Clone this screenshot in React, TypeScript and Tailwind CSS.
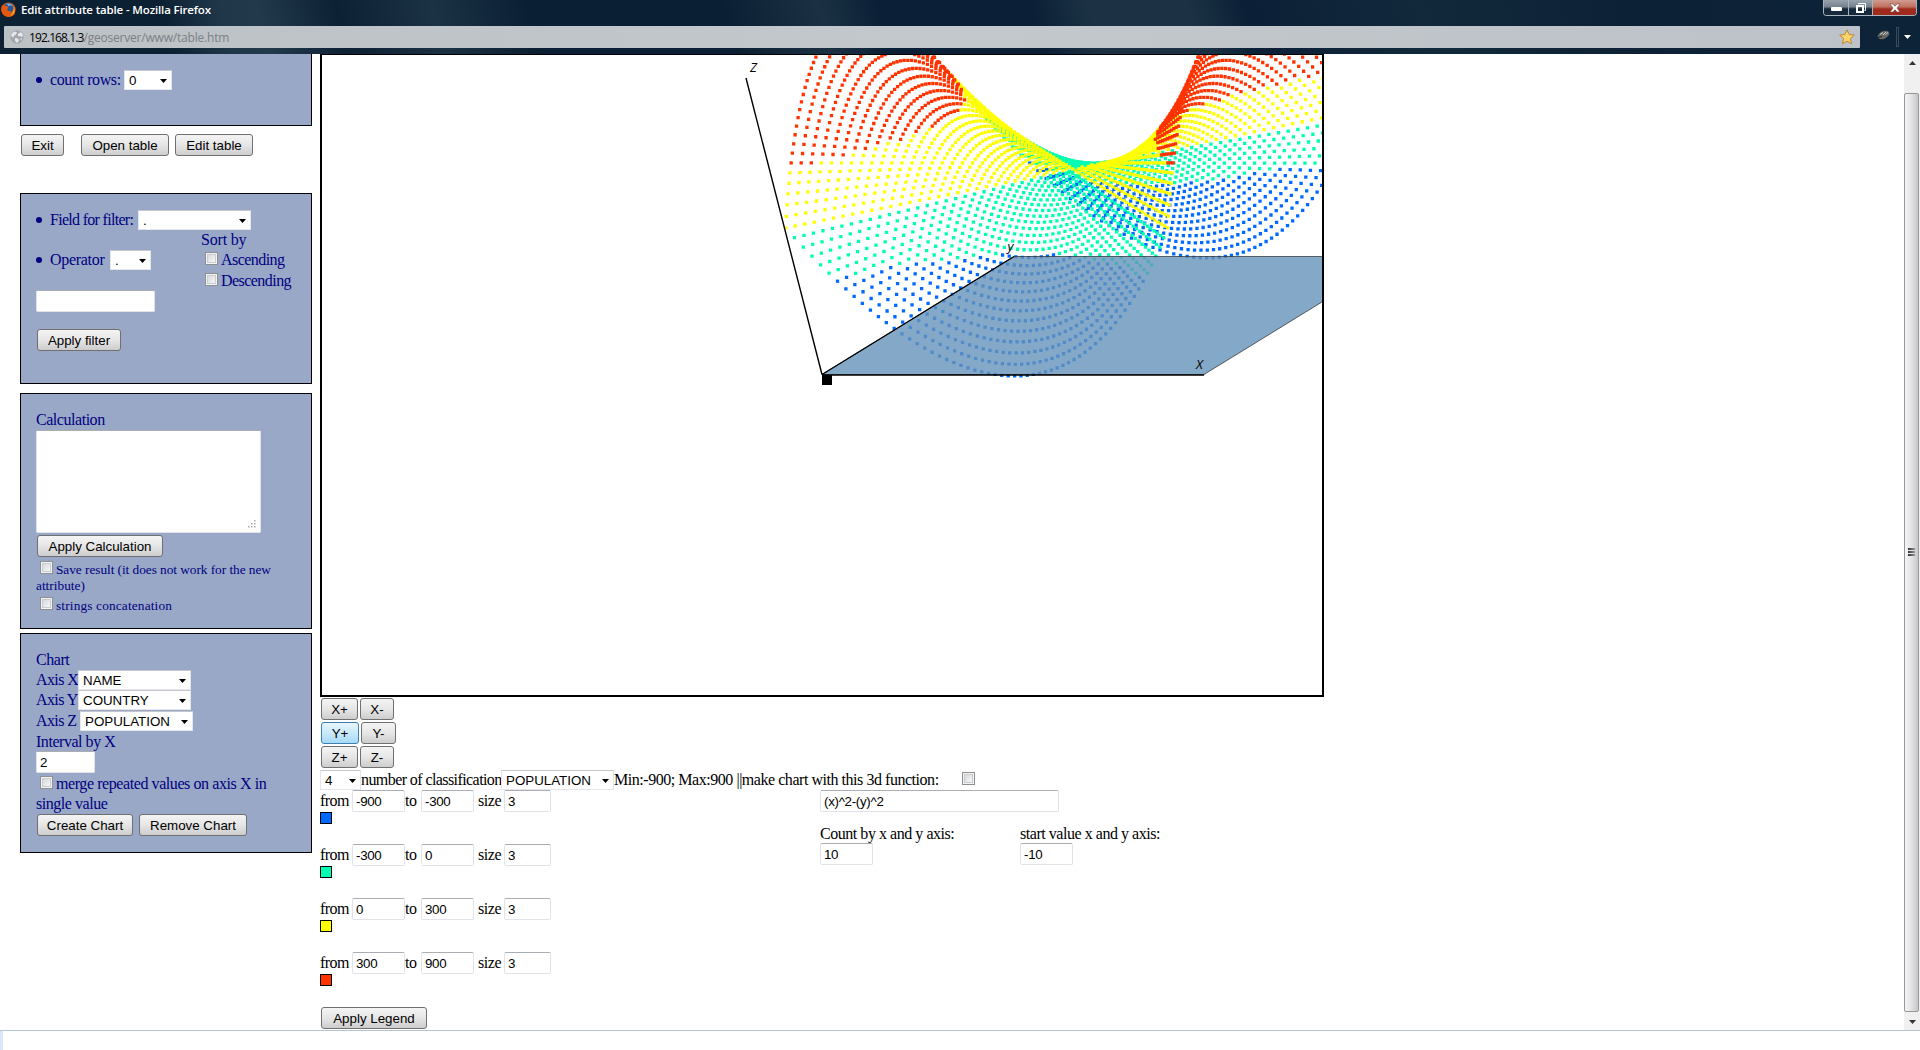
import React from "react";

type BoxProps = { className?: string; children?: React.ReactNode };

const Btn = ({ className = "", active = false, children }: BoxProps & { active?: boolean }) => (
  <button
    className={`flex h-[22px] shrink-0 items-center justify-center whitespace-nowrap rounded-[3px] border pt-px font-['Liberation_Sans',sans-serif] text-[13.33px] leading-none tracking-normal text-black ${
      active
        ? "border-[#3c7fb1] bg-linear-to-b from-[#e8f5fc] via-[#c9e9fb] to-[#a4d9f6]"
        : "border-[#707070] bg-linear-to-b from-[#f4f4f4] from-0% via-[#e6e6e6] via-50% to-[#cdcdcd]"
    } ${className}`}
  >
    {children}
  </button>
);

const Select = ({ className = "", children }: BoxProps) => (
  <div
    className={`flex h-5 shrink-0 items-center justify-between rounded-[1px] border border-[#e3e6ec] border-t-[#c4c6cc] bg-white px-1 pt-px font-['Liberation_Sans',sans-serif] text-[13.33px] leading-none tracking-normal text-black ${className}`}
  >
    <span>{children}</span>
    <svg width="7" height="4" viewBox="0 0 7 4">
      <path d="M0 0H7L3.5 4Z" />
    </svg>
  </div>
);

const Field = ({ className = "", children }: BoxProps) => (
  <div
    className={`flex h-[22px] shrink-0 items-center rounded-[2px] border border-[#e0e3ea] border-t-[#abadb3] bg-white pl-[3px] pt-px font-['Liberation_Sans',sans-serif] text-[13.33px] leading-none tracking-[-0.3px] text-black ${className}`}
  >
    {children}
  </div>
);

const Check = ({ className = "" }: BoxProps) => (
  <span
    className={`flex size-[13px] shrink-0 items-center justify-center border border-[#8e8f8f] bg-[#f4f4f4] ${className}`}
  >
    <span className="size-[9px] border border-[#c8ccd1] bg-linear-to-br from-[#d6d9dd] to-[#f6f6f6]" />
  </span>
);

const Panel = ({ className = "", children }: BoxProps) => (
  <section className={`flex w-[292px] shrink-0 flex-col border border-black bg-[#99a8c7] pl-[15px] ${className}`}>
    {children}
  </section>
);

const Bullet = () => <span className="mr-2 size-[6px] shrink-0 rounded-full bg-[#000080]" />;

const LIMIT = 30;
const colourOf = (z: number) =>
  z < -300 ? "#0069ff" : z < 0 ? "#00ffb3" : z < 300 ? "#ffff00" : "#ff3300";

type Run = { colour: string; d: string };

function surfaceRuns(): Run[] {
  const runs: Run[] = [];
  for (let x = -LIMIT; x <= LIMIT; x++) {
    for (let y = -LIMIT; y <= LIMIT; y++) {
      const z = x * x - y * y;
      const u = (x + LIMIT) / 60;
      const v = (y + LIMIT) / 60;
      const w = (z + 900) / 1800;
      const px = 500 + 382 * u + 192 * v - 76 * w;
      const py = 319.3 - 118 * v - 296 * w;
      if (py < -4 || px > 1001) continue;
      const colour = colourOf(z);
      const dot = `M${px.toFixed(2)} ${py.toFixed(2)}h3.3v3.3h-3.3z`;
      const last = runs[runs.length - 1];
      if (last && last.colour === colour) last.d += dot;
      else runs.push({ colour, d: dot });
    }
  }
  return runs;
}

const RUNS = surfaceRuns();

const Chart = () => (
  <svg width="1000" height="640" viewBox="0 0 1000 640" className="block font-['Open_Sans',sans-serif] tracking-normal">
    {RUNS.map((r, i) => (
      <path key={i} d={r.d} fill={r.colour} />
    ))}
    <path d="M500 319.5L692 201.5H1074L882 319.5Z" fill="#6594ba" fillOpacity="0.8" stroke="#333" strokeOpacity="0.75" />
    <path d="M424 23L500 319.5M500 320H882M500 319.5L692 201.5" fill="none" stroke="#000" strokeWidth="1.4" />
    <rect x="500" y="320" width="10" height="10" />
    <g fontSize="13" fontStyle="italic">
      <text x="428" y="17">Z</text>
      <text x="685.500" y="196">y</text>
      <text x="874" y="314">X</text>
    </g>
  </svg>
);

const FirefoxIcon = () => (
  <svg width="15" height="15" viewBox="0 0 16 16">
    <circle cx="8" cy="8" r="7.6" fill="#e2590f" />
    <circle cx="8.2" cy="6.4" r="5" fill="#245a9c" />
    <path d="M6 1.8c3-.8 5.500.2 6.500 2.700-2-1.200-3.500-.8-4.500 0z" fill="#66b5e6" />
    <path d="M1 4C2 3 3 3.500 4 4.500c2-.5 3 .2 4 1.500L6.500 7.500c0 2 2 3 4.500 2-1 2.500-4 3.500-6 2C7 15 13 14 14 9V5c2 4 1.500 8-2 10-5 2.500-11-.5-11.600-6C.2 7 .4 5.500 1 4z" fill="#e8590c" />
    <path d="M13.500 4.500c2 4 .5 9-3.500 10.100 3-2.500 4-5.500 3.500-10.100z" fill="#ffce3a" />
  </svg>
);

const Globe = () => (
  <svg width="14" height="14" viewBox="0 0 14 14">
    <circle cx="7" cy="7" r="6.700" fill="#a3a7ab" />
    <path d="M2 3l3-1.500 2 1-1 2-2 1-.5 2L1 6zM8 4l3-2 2 3-1 2-2-1-2 .5zM5 8l3 .5 1 2-2 2.500-2-2zM10 9l2-1-.5 2.500z" fill="#e6e8ea" />
  </svg>
);

const Titlebar = () => (
  <header className="flex h-[54px] shrink-0 flex-col bg-[linear-gradient(75deg,#0d2134_0%,#0c2033_9%,#20374a_12%,#22394b_14%,#0d2135_18%,#1b3144_23%,#0a1f33_28%,#0a1f33_38%,#1b3143_43%,#0b2036_46%,#0b2036_54%,#1c3244_57%,#1c3244_62%,#0b2036_65%,#12283b_74%,#0c2135_85%,#0d2337_100%)] font-['Open_Sans',sans-serif]">
    <div className="flex h-[26px] items-start pl-px">
      <span className="mt-[2px]">
        <FirefoxIcon />
      </span>
      <span className="ml-[5px] mt-px whitespace-nowrap text-[11.500px] font-semibold leading-[18px] tracking-[-0.15px] text-white">
        Edit attribute table - Mozilla Firefox
      </span>
      <div className="ml-auto mr-[3px] flex h-4 w-[94px] overflow-hidden rounded-b-[4px] border border-t-0 border-[#aab4bd]">
        <span className="flex w-[25px] items-center justify-center border-r border-[#aab4bd] bg-linear-to-b from-[#97a2ad] from-0% via-[#76828e] via-45% to-[#16283b] to-60%">
          <span className="mt-[3px] h-1 w-[11px] rounded-[1px] bg-white" />
        </span>
        <span className="flex w-6 items-center justify-center border-r border-[#aab4bd] bg-linear-to-b from-[#97a2ad] from-0% via-[#76828e] via-45% to-[#16283b] to-60%">
          <svg width="12" height="12" viewBox="0 0 12 12" fill="none" stroke="#fff">
            <path d="M3.500 2.500v-1h7v7h-1" />
            <path d="M2 4h6v6H2z" strokeWidth="2" />
          </svg>
        </span>
        <span className="flex flex-1 items-center justify-center bg-linear-to-b from-[#cf9c90] from-0% via-[#c0705f] via-45% to-[#a02a1b] to-60%">
          <svg width="12" height="10" viewBox="0 0 12 10">
            <path d="M1 1h3l2 2.300L8 1h3L8 5l3 4H8L6 6.700 4 9H1l3-4z" fill="#fff" stroke="#5a3434" strokeWidth=".5" />
          </svg>
        </span>
      </div>
    </div>
    <div className="flex h-[22px] items-center">
      <div className="ml-1 flex h-[22px] w-[1856px] items-center rounded-[1px] bg-linear-to-r from-[#bcc1c6] via-[#c3c8cc] to-[#bcc2c8] pl-[6px] pr-[5px]">
        <Globe />
        <span className="ml-[5px] whitespace-nowrap pt-[2px] text-[12px] leading-none tracking-[-0.2px] text-[#7b8085]">
          <span className="tracking-[-0.9px] text-black">192.168.1.3</span>/geoserver/www/table.htm
        </span>
        <svg className="ml-auto" width="16" height="16" viewBox="0 0 16 16">
          <path d="M8 .8l2.200 4.700 5.100.6-3.800 3.500 1 5.200L8 12.300l-4.500 2.500 1-5.200L.7 6.100l5.100-.6z" fill="#fcd364" stroke="#b9873c" />
        </svg>
      </div>
      <svg className="mb-1 ml-4" width="15" height="12" viewBox="0 0 15 12">
        <ellipse cx="7.500" cy="6" rx="6.300" ry="3.700" transform="rotate(-24 7.500 6)" fill="#666" />
        <path d="M4 5.500l3-2M7 6l3-3M9.500 5.500l2.500-2" stroke="#ccc" />
        <path d="M2 8.500l4-1" stroke="#222" />
      </svg>
      <span className="ml-[5px] h-5 w-[3px] border border-[#3a4a59]" />
      <svg className="ml-[5px]" width="7" height="4" viewBox="0 0 7 4">
        <path d="M0 0H7L3.500 4Z" fill="#fff" />
      </svg>
    </div>
  </header>
);

const Grip = () => <i className="h-[2px] w-[7px] bg-linear-to-r from-[#333] to-[#999]" />;

const Scrollbar = () => (
  <div className="flex h-[976px] w-4 shrink-0 flex-col items-center bg-[#f0f0f0]">
    <svg className="mt-[7px]" width="7" height="4" viewBox="0 0 7 4">
      <path d="M0 4H7L3.500 0Z" fill="#333" />
    </svg>
    <div className="mr-px mt-7 flex h-[919px] w-[15px] flex-col items-center justify-center gap-px rounded-[2px] border border-[#979797] bg-linear-to-r from-[#f5f5f5] via-[#e3e3e6] via-50% to-[#c6c6ca] pb-px pr-px">
      <Grip />
      <Grip />
      <Grip />
    </div>
    <svg className="mt-2" width="7" height="4" viewBox="0 0 7 4">
      <path d="M0 0H7L3.500 4Z" fill="#333" />
    </svg>
  </div>
);

const Sidebar = () => (
  <aside className="ml-5 flex w-[292px] shrink-0 flex-col text-[#000080]">
    <Panel className="h-[72px] border-t-0 pt-4">
      <div className="flex h-5 items-center">
        <Bullet />
        <span className="w-[74px] tracking-[-0.4px]">count rows:</span>
        <Select className="w-12">0</Select>
      </div>
    </Panel>
    <div className="mt-2 flex pl-px">
      <Btn className="w-[43px]">Exit</Btn>
      <Btn className="ml-[17px] w-[88px]">Open table</Btn>
      <Btn className="ml-[6px] w-[78px]">Edit table</Btn>
    </div>

    <Panel className="mt-[37px] h-[191px] pt-4">
      <div className="flex h-5 items-center">
        <Bullet />
        <span className="w-[88px] tracking-[-0.7px]">Field for filter:</span>
        <Select className="w-[113px]">.</Select>
      </div>
      <div className="flex">
        <div className="w-[165px]">
          <div className="mt-5 flex h-5 items-center">
            <Bullet />
            <span className="w-[60px] tracking-[-0.3px]">Operator</span>
            <Select className="w-[41px]">.</Select>
          </div>
          <Field className="mt-5 w-[119px]" />
        </div>
        <div className="flex flex-col">
          <div className="flex h-5 items-center tracking-[-0.2px]">Sort by</div>
          <div className="flex h-5 items-center pl-1">
            <Check className="mb-[3px] mr-[3px]" />
            <span className="tracking-[-0.55px]">Ascending</span>
          </div>
          <div className="flex h-[22px] items-center pl-1">
            <Check className="mb-[3px] mr-[3px]" />
            <span className="tracking-[-0.55px]">Descending</span>
          </div>
        </div>
      </div>
      <Btn className="ml-px mt-[17px] w-[84px]">Apply filter</Btn>
    </Panel>

    <Panel className="mt-[9px] h-[236px] pt-4">
      <div className="flex h-5 items-center">Calculation</div>
      <div className="flex h-[103px] w-[225px] items-end justify-end rounded-[2px] border border-[#e0e3ea] border-t-[#abadb3] bg-white p-1">
        <svg width="8" height="8" viewBox="0 0 8 8" fill="#aaa">
          <path d="M6 0h1.500v1.500H6zM3 3h1.500v1.500H3zM6 3h1.500v1.500H6zM0 6h1.500v1.500H0zM3 6h1.500v1.500H3zM6 6h1.500v1.500H6z" />
        </svg>
      </div>
      <Btn className="ml-px mt-[2px] w-[126px]">Apply Calculation</Btn>
      <div className="mt-[3px] flex h-5 items-center whitespace-nowrap pl-1 text-[13.33px] tracking-[-0.05px]">
        <Check className="mb-[5px] mr-[3px]" />
        Save result (it does not work for the new
      </div>
      <div className="flex h-3 items-center text-[13.33px] tracking-normal">attribute)</div>
      <div className="mt-1 flex h-5 items-center pl-1 text-[13.33px] tracking-[0.15px]">
        <Check className="mb-[5px] mr-[3px]" />
        strings concatenation
      </div>
    </Panel>

    <Panel className="mt-1 h-[220px] pt-4">
      <div className="flex h-5 items-center">Chart</div>
      <div className="flex h-5 items-center whitespace-nowrap">
        <span className="w-[42px] tracking-[-0.6px]">Axis X</span>
        <Select className="w-[113px]">NAME</Select>
      </div>
      <div className="flex h-5 items-center whitespace-nowrap">
        <span className="w-[42px] tracking-[-0.6px]">Axis Y</span>
        <Select className="w-[113px]">COUNTRY</Select>
      </div>
      <div className="flex h-[22px] items-center whitespace-nowrap">
        <span className="w-[44px] tracking-[-0.6px]">Axis Z</span>
        <Select className="w-[113px]">POPULATION</Select>
      </div>
      <div className="flex h-[19px] items-center">Interval by X</div>
      <Field className="w-[59px]">2</Field>
      <div className="flex h-[22px] items-center whitespace-nowrap pl-1">
        <Check className="mb-[3px] mr-[3px]" />
        <span className="tracking-[-0.42px]">merge repeated values on axis X in</span>
      </div>
      <div className="flex h-[18px] items-center">single value</div>
      <div className="mt-px flex pl-px">
        <Btn className="w-24">Create Chart</Btn>
        <Btn className="ml-[6px] w-[108px]">Remove Chart</Btn>
      </div>
    </Panel>
  </aside>
);

const CLASSES = [
  { from: "-900", to: "-300", swatch: "bg-[#0069ff]" },
  { from: "-300", to: "0", swatch: "bg-[#00ffb3]" },
  { from: "0", to: "300", swatch: "bg-[#ffff00]" },
  { from: "300", to: "900", swatch: "bg-[#ff3300]" },
];

const Main = () => (
  <main className="ml-2 flex w-[1004px] shrink-0 flex-col text-black">
    <div className="h-[643px] w-[1004px] overflow-hidden border-2 border-t border-black">
      <Chart />
    </div>
    <div className="mt-px flex flex-col gap-[2px] pl-px">
      <div className="flex gap-[2px]">
        <Btn className="w-[37px]">X+</Btn>
        <Btn className="w-[34px]">X-</Btn>
      </div>
      <div className="flex gap-[2px]">
        <Btn active className="w-[38px]">Y+</Btn>
        <Btn className="w-[35px]">Y-</Btn>
      </div>
      <div className="flex gap-[2px]">
        <Btn className="w-[37px]">Z+</Btn>
        <Btn className="w-[34px]">Z-</Btn>
      </div>
    </div>
    <div className="mt-[2px] flex h-5 items-center whitespace-nowrap">
      <Select className="w-[41px]">4</Select>
      <span className="w-[140px] tracking-[-0.58px]">number of classification</span>
      <Select className="w-[113px]">POPULATION</Select>
      <span className="w-[348px]">Min:-900; Max:900 ||make chart with this 3d function:</span>
      <Check className="mb-[3px]" />
    </div>
    <div className="flex">
      <div className="flex w-[500px] flex-col">
        {CLASSES.map((c) => (
          <div key={c.from} className="h-[54px]">
            <div className="flex h-[22px] items-center">
              <span className="w-8 tracking-[-0.55px]">from</span>
              <Field className="w-[53px]">{c.from}</Field>
              <span className="w-4">to</span>
              <Field className="w-[53px]">{c.to}</Field>
              <span className="ml-1 w-[26px]">size</span>
              <Field className="w-[47px]">3</Field>
            </div>
            <div className={`size-3 border border-black ${c.swatch}`} />
          </div>
        ))}
        <Btn className="ml-px mt-px w-[106px]">Apply Legend</Btn>
      </div>
      <div className="flex flex-col">
        <Field className="w-[239px]">(x)^2-(y)^2</Field>
        <div className="mt-[13px] flex whitespace-nowrap">
          <div className="w-[200px]">
            <div className="flex h-[18px] items-center">Count by x and y axis:</div>
            <Field className="w-[53px]">10</Field>
          </div>
          <div>
            <div className="flex h-[18px] items-center">start value x and y axis:</div>
            <Field className="w-[53px]">-10</Field>
          </div>
        </div>
      </div>
    </div>
  </main>
);

export default function App() {
  return (
    <div className="flex h-[1050px] w-[1920px] flex-col overflow-hidden bg-white font-['Liberation_Serif',serif] text-[16px] leading-none tracking-[-0.46px]">
      <Titlebar />
      <div className="flex h-[976px] shrink-0">
        <Sidebar />
        <Main />
        <div className="flex-1" />
        <Scrollbar />
      </div>
      <footer className="flex h-5 shrink-0 border-t border-[#b5c4d3] bg-white">
        <span className="w-[3px] bg-[#d6e8f8]" />
      </footer>
    </div>
  );
}
